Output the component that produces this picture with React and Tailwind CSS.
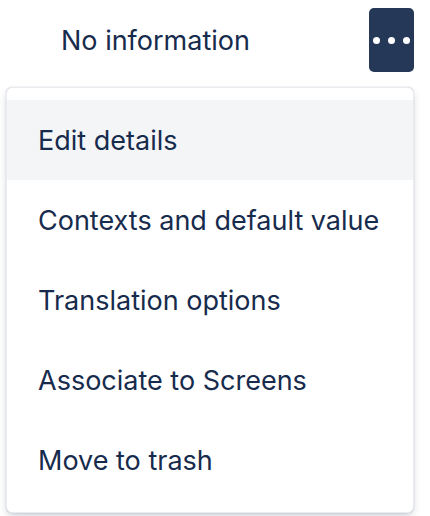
const items = [
  'Edit details',
  'Contexts and default value',
  'Translation options',
  'Associate to Screens',
  'Move to trash',
]

export default function App() {
  return (
    <div
      className="h-[516px] w-[430px] overflow-hidden bg-white text-[#172b4d]"
      style={{ fontFamily: 'Inter, "Noto Sans", sans-serif' }}
    >
      <div className="flex items-start justify-between pt-2 pl-[61px] pr-4">
        <span className="mt-[18px] text-[27px] leading-[30px]">No information</span>
        <button className="flex h-16 w-[45px] items-center justify-center gap-[8px] rounded-[5px] bg-[#253858]">
          <span className="h-[7px] w-[7px] rounded-full bg-white" />
          <span className="h-[7px] w-[7px] rounded-full bg-white" />
          <span className="h-[7px] w-[7px] rounded-full bg-white" />
        </button>
      </div>

      <div className="mt-[15px] ml-[6px] w-[408px] rounded-[6px] border border-[#ebecf0] bg-white py-3 shadow-[0_4px_8px_-2px_rgba(9,30,66,0.25),0_0_1px_rgba(9,30,66,0.31)]">
        {items.map((item, i) => (
          <div
            key={item}
            className={
              i === 0
                ? 'flex h-20 items-center bg-[#f4f5f7] pt-[2px] pl-[31px] pr-8 text-[27px]'
                : 'flex h-20 items-center pt-[2px] pl-[31px] pr-8 text-[27px]'
            }
          >
            {item}
          </div>
        ))}
      </div>
    </div>
  )
}
